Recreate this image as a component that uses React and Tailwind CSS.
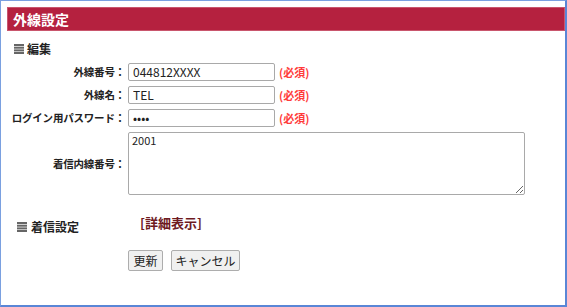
import React from 'react'

const font = { fontFamily: '"Noto Sans CJK JP", "Liberation Sans", sans-serif' }

function BarsIcon() {
    return (
        <svg width="10" height="10" viewBox="0 0 10 10" className="shrink-0">
            <rect x="0" y="0" width="10" height="2" fill="#666" />
            <rect x="0" y="2.7" width="10" height="2" fill="#666" />
            <rect x="0" y="5.4" width="10" height="2" fill="#666" />
            <rect x="0" y="8" width="10" height="2" fill="#666" />
        </svg>
    )
}

function Row({ label, children }) {
    return (
        <div className="flex items-center h-[18px]">
            <div className="w-[121px] shrink-0 text-right text-[10.5px] font-bold text-[#222] pr-[3px] whitespace-nowrap tracking-[-0.2px]">{label}</div>
            {children}
        </div>
    )
}

function Required() {
    return <span className="ml-[4px] text-[11px] font-bold text-[#ff3b3b]">(必須)</span>
}

export default function App() {
    return (
        <div className="w-[567px] h-[307px] bg-white border-l border-t border-[#7aa0e0] border-r-2 border-b-2 border-r-[#5a86d6] border-b-[#5a86d6] pl-[6px] pt-[6px] overflow-hidden" style={font}>
            <div className="h-[24px] bg-[#b5213f] border border-[#c9566d] flex items-center pl-[5px]">
                <span className="text-white font-bold text-[14px] leading-none">外線設定</span>
            </div>

            <div className="flex items-center gap-[3px] pl-[7px] mt-[12px]">
                <BarsIcon />
                <span className="text-[12px] font-bold text-[#222] leading-none">編集</span>
            </div>

            <div className="flex flex-col gap-[5px] mt-[8px]">
                <Row label="外線番号：">
                    <input readOnly value="044812XXXX" className="w-[147px] h-[18px] border border-[#a9a9a9] rounded-[2px] px-[4px] text-[12px] text-[#222] outline-none" />
                    <Required />
                </Row>
                <Row label="外線名：">
                    <input readOnly value="TEL" className="w-[147px] h-[18px] border border-[#a9a9a9] rounded-[2px] px-[4px] text-[12px] text-[#222] outline-none" />
                    <Required />
                </Row>
                <Row label="ログイン用パスワード：">
                    <input readOnly type="password" value="2001" className="w-[147px] h-[18px] border border-[#a9a9a9] rounded-[2px] px-[4px] text-[12px] text-[#222] outline-none" />
                    <Required />
                </Row>
                <div className="flex items-center">
                    <div className="w-[121px] shrink-0 text-right text-[10.5px] font-bold text-[#222] pr-[3px] tracking-[-0.2px]">着信内線番号：</div>
                    <textarea readOnly value="2001" className="w-[397px] h-[63px] border border-[#a9a9a9] rounded-[2px] px-[3px] py-0 text-[11px] leading-[14px] text-[#222] outline-none resize" />
                </div>
            </div>

            <div className="flex items-center mt-[16px]">
                <div className="flex items-center gap-[4px] pl-[10px] w-[133px] mt-[10px]">
                    <BarsIcon />
                    <span className="text-[12px] font-bold text-[#222] leading-none">着信設定</span>
                </div>
                <span className="text-[13px] font-bold text-[#6e1a1f] leading-none">[詳細表示]</span>
            </div>

            <div className="flex gap-[8px] pl-[121px] mt-[17px]">
                <button className="h-[21px] w-[35px] border border-[#adadad] rounded-[2px] bg-[#f0f0f0] text-[12px] text-[#222]">更新</button>
                <button className="h-[21px] w-[69px] border border-[#adadad] rounded-[2px] bg-[#f0f0f0] text-[12px] text-[#222]">キャンセル</button>
            </div>
        </div>
    )
}
